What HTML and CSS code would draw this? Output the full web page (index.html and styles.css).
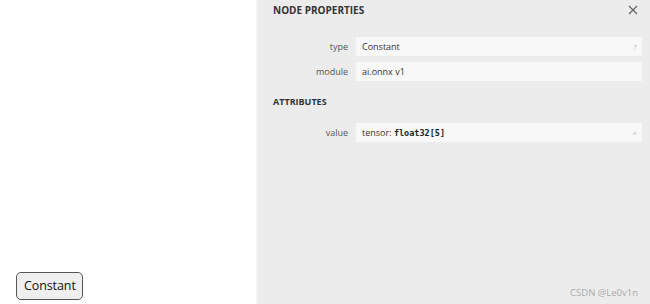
FILE: index.html
```html
<!DOCTYPE html>
<html lang="en">
<head>
    <meta charset="UTF-8">
    <title>Node Properties</title>
    <link rel="stylesheet" href="styles.css">
</head>
<body>
    <div class="graph">
        <div class="node-button">Constant</div>
    </div>
    <div class="sidebar">
        <div class="sidebar-header">
            <span class="sidebar-title">NODE PROPERTIES</span>
            <span class="sidebar-close">
                <svg width="10" height="10" viewBox="0 0 10 10"><path d="M1 1L9 9M9 1L1 9" stroke="#666" stroke-width="1.3"/></svg>
            </span>
        </div>
        <div class="props">
            <div class="prop-row">
                <div class="prop-name">type</div>
                <div class="prop-value">Constant<span class="prop-btn">?</span></div>
            </div>
            <div class="prop-row">
                <div class="prop-name">module</div>
                <div class="prop-value">ai.onnx v1</div>
            </div>
        </div>
        <div class="section-title">ATTRIBUTES</div>
        <div class="props">
            <div class="prop-row">
                <div class="prop-name">value</div>
                <div class="prop-value">tensor: <code>float32[5]</code><span class="prop-btn">+</span></div>
            </div>
        </div>
        <div class="watermark">CSDN @Le0v1n</div>
    </div>
</body>
</html>
```

FILE: styles.css
```css
html, body {
    margin: 0;
    height: 100%;
}
body {
    display: flex;
    font-family: "Open Sans", "Noto Sans", sans-serif;
    background-color: #fff;
    overflow: hidden;
}
.graph {
    width: 256px;
    display: flex;
    align-items: flex-end;
    padding: 0 0 4px 16px;
    box-sizing: border-box;
}
.node-button {
    font-size: 12.5px;
    color: #111;
    background-color: #efefef;
    border: 1px solid #555;
    border-radius: 5px;
    padding: 4px 6px 5px 7px;
    letter-spacing: -0.1px;
}
.sidebar {
    flex: 1;
    background-color: #ececec;
    border-left: 2px solid #f2f2f2;
    position: relative;
    padding: 0 8px 0 15px;
}
.sidebar-header {
    display: flex;
    justify-content: space-between;
    align-items: center;
    height: 19px;
}
.sidebar-title {
    font-size: 10px;
    font-weight: bold;
    color: #333;
}
.sidebar-close {
    display: flex;
    margin-right: 4px;
}
.props {
    display: flex;
    flex-direction: column;
    gap: 6px;
}
.sidebar-header + .props {
    margin-top: 18px;
}
.prop-row {
    display: flex;
    align-items: center;
    height: 19px;
}
.prop-name {
    width: 83px;
    text-align: right;
    font-size: 9px;
    color: #555;
    padding-right: 8px;
    box-sizing: border-box;
}
.prop-value {
    flex: 1;
    height: 19px;
    line-height: 19px;
    background-color: #f8f8f8;
    font-size: 9px;
    color: #333;
    padding-left: 6px;
    position: relative;
}
.prop-value code {
    font-family: "DejaVu Sans Mono", monospace;
    font-size: 8.5px;
    font-weight: bold;
    color: #222;
}
.prop-btn {
    position: absolute;
    right: 5px;
    top: 0;
    color: #bbb;
    font-size: 8px;
}
.section-title {
    font-size: 9px;
    font-weight: bold;
    color: #333;
    margin: 14px 0 15px 0;
}
.watermark {
    position: absolute;
    right: 12px;
    bottom: 5px;
    font-size: 9.5px;
    color: #aaa;
}
```
